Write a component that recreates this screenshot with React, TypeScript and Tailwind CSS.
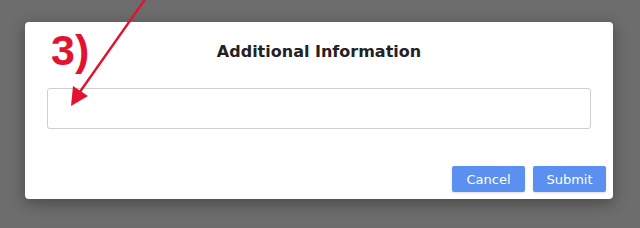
import React from 'react';

export default function App() {
  return (
    <div className="relative h-[228px] w-[640px] overflow-hidden bg-[#6d6d6d] pl-[25px] pt-[22px] font-['DejaVu_Sans',sans-serif]">
      <div className="flex h-[177px] w-[588px] flex-col rounded-[4px] bg-white shadow-[0_4px_16px_rgba(0,0,0,0.35)]">
        <h2 className="mt-[20px] text-center text-[16px] font-bold leading-[20px] text-[#222]">
          Additional Information
        </h2>
        <div className="mt-[26px] px-[22px]">
          <input
            type="text"
            className="h-[41px] w-full rounded-[3px] border border-[#cfcfcf] bg-white px-2 outline-none"
          />
        </div>
        <div className="mt-auto mb-[7px] mr-[7px] flex justify-end gap-[8px]">
          <button className="h-[26px] w-[73px] rounded-[2px] bg-[#5b8ff0] text-[13px] leading-none text-white shadow-sm">
            Cancel
          </button>
          <button className="h-[26px] w-[73px] rounded-[2px] bg-[#5b8ff0] text-[13px] leading-none text-white shadow-sm">
            Submit
          </button>
        </div>
      </div>

      {/* annotation */}
      <span className="absolute left-[51px] top-[27px] font-['Liberation_Sans',sans-serif] text-[43px] font-bold leading-[46px] text-[#e3122f]">
        3)
      </span>
      <svg
        className="absolute left-0 top-0"
        width="640"
        height="228"
        viewBox="0 0 640 228"
      >
        <line x1="146" y1="-2" x2="77" y2="96" stroke="#e3122f" strokeWidth="2.4" strokeLinecap="round" />
        <polygon points="71,106 73,86 88,96" fill="#e3122f" />
      </svg>
    </div>
  );
}
